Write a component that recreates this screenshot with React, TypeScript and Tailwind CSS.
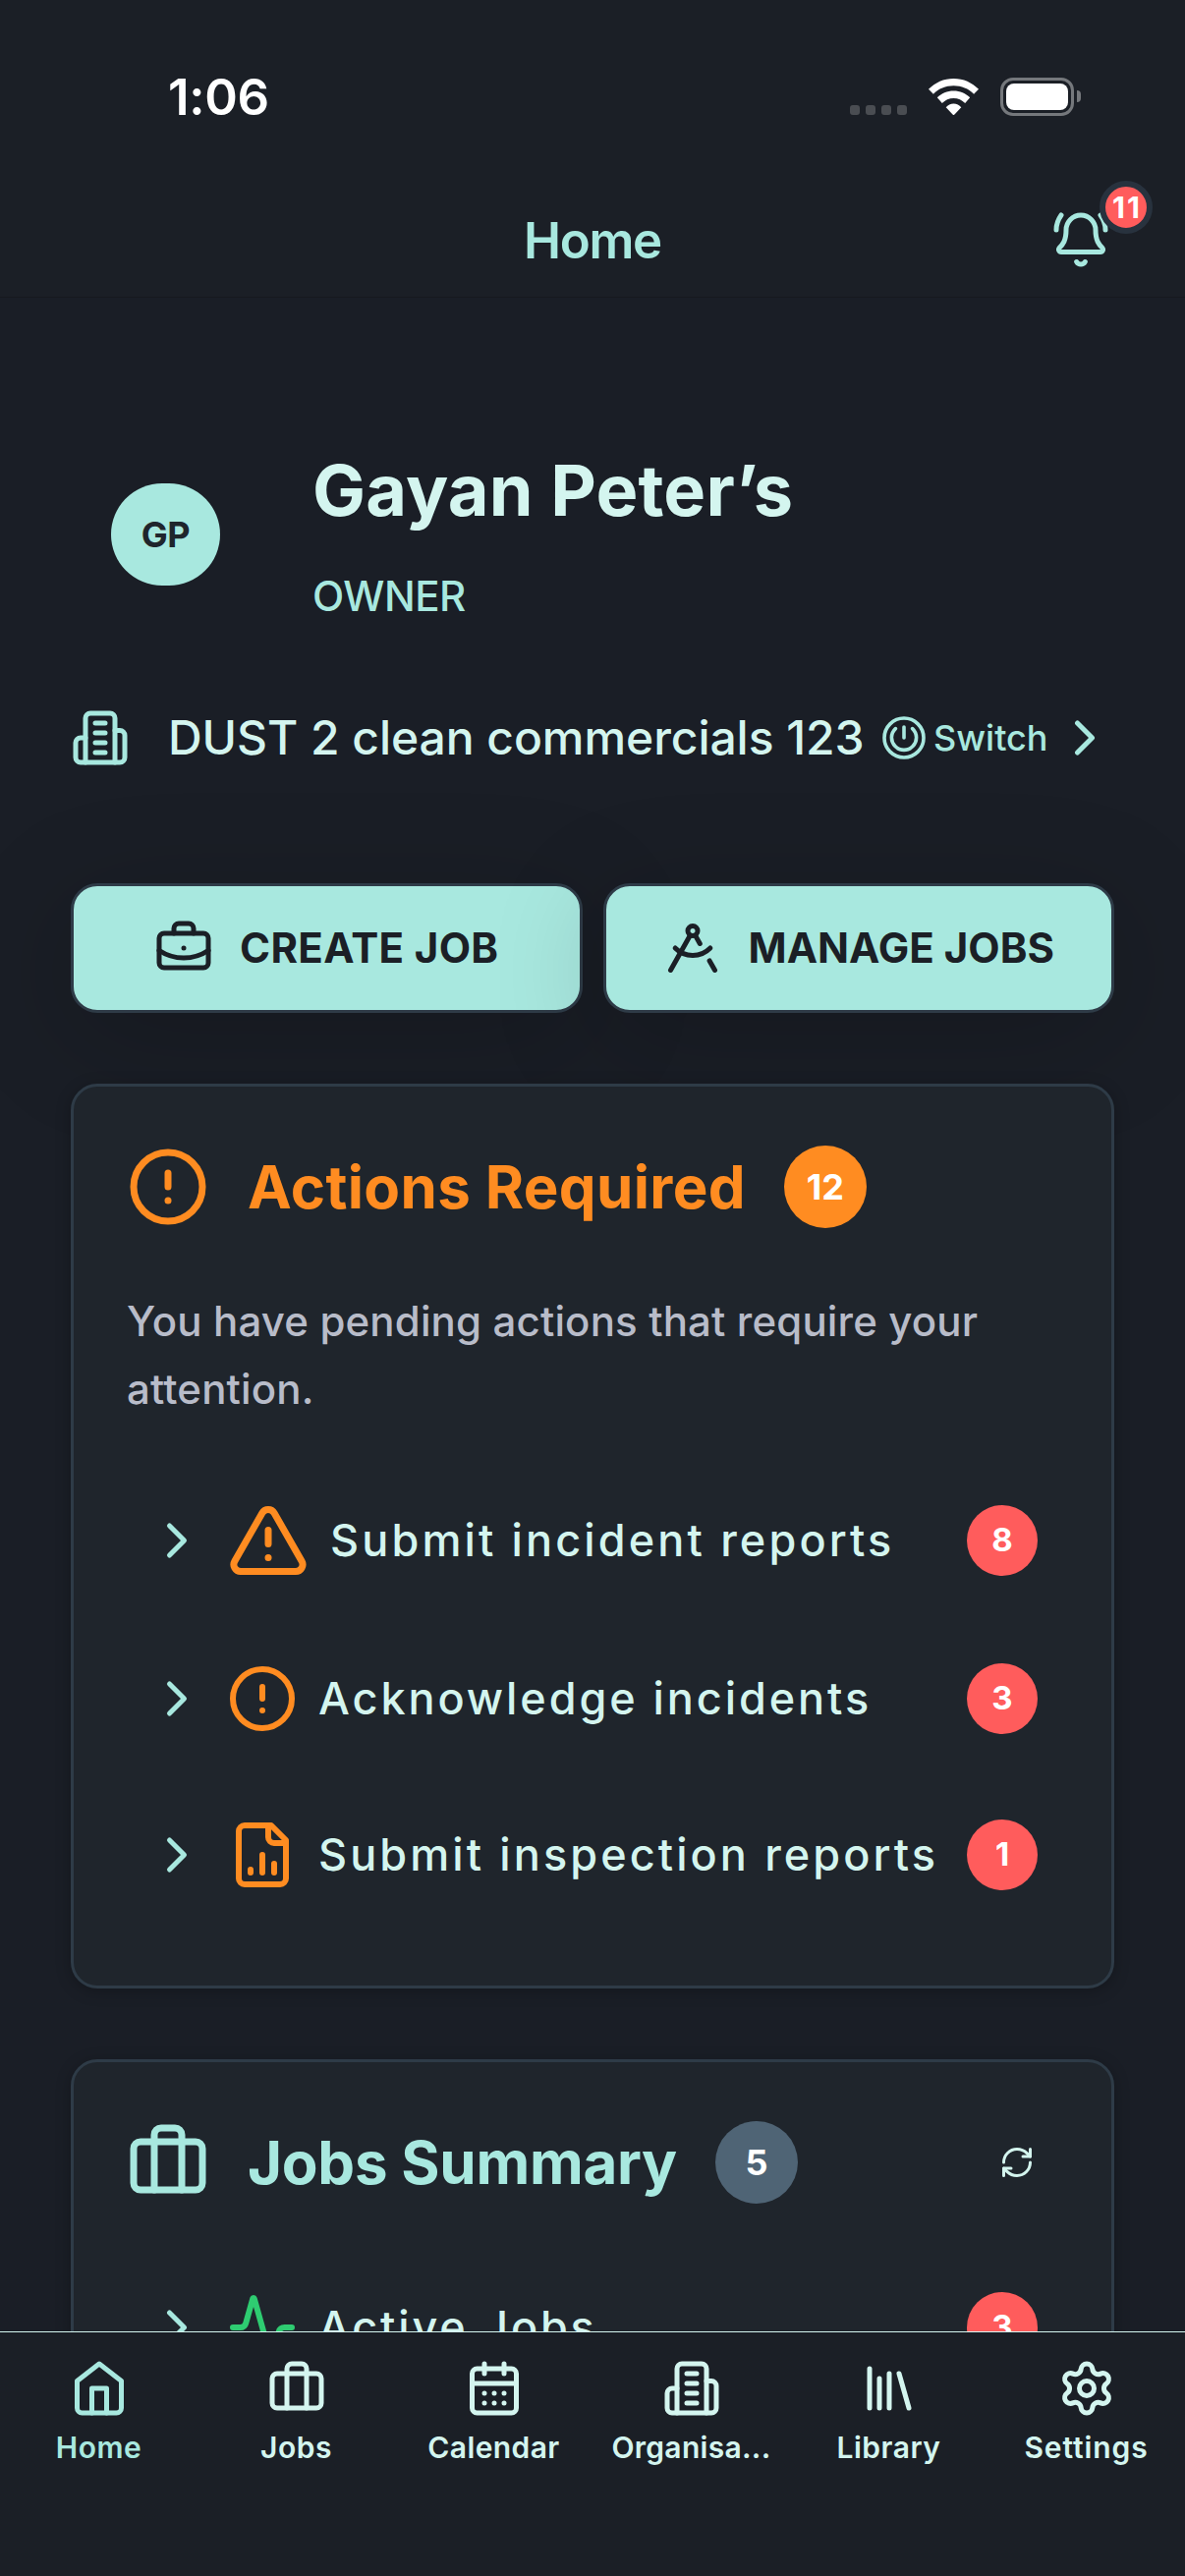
import type { ReactNode } from "react";

type IconProps = { className?: string; children: ReactNode };

function Icon({ className = "size-[60px]", children }: IconProps) {
  return (
    <svg
      viewBox="0 0 24 24"
      fill="none"
      stroke="currentColor"
      strokeWidth="2"
      strokeLinecap="round"
      strokeLinejoin="round"
      className={`shrink-0 ${className}`}
    >
      {children}
    </svg>
  );
}

type P = { className?: string };

const BellRing = (p: P) => (
  <Icon {...p}>
    <path d="M10.268 21a2 2 0 0 0 3.464 0" />
    <path d="M22 8c0-2.3-.8-4.3-2-6" />
    <path d="M3.262 15.326A1 1 0 0 0 4 17h16a1 1 0 0 0 .74-1.673C19.41 13.956 18 12.499 18 8A6 6 0 0 0 6 8c0 4.499-1.411 5.956-2.738 7.326" />
    <path d="M4 2C2.8 3.7 2 5.7 2 8" />
  </Icon>
);

const Building = (p: P) => (
  <Icon {...p}>
    <path d="M6 22V4a2 2 0 0 1 2-2h8a2 2 0 0 1 2 2v18Z" />
    <path d="M6 12H4a2 2 0 0 0-2 2v6a2 2 0 0 0 2 2h2" />
    <path d="M18 9h2a2 2 0 0 1 2 2v9a2 2 0 0 1-2 2h-2" />
    <path d="M10 6h4M10 10h4M10 14h4M10 18h4" />
  </Icon>
);

const CirclePower = (p: P) => (
  <Icon {...p}>
    <g strokeWidth="1.8">
      <path d="M12 6.500v5.500" />
      <path d="M7.700 7.300a6.300 6.300 0 1 0 8.600 0" />
    </g>
    <circle cx="12" cy="12" r="10" strokeWidth="1.8" />
  </Icon>
);

const ChevronRight = (p: P) => (
  <Icon {...p}>
    <path d="m9 18 6-6-6-6" />
  </Icon>
);

const BriefcaseBusiness = (p: P) => (
  <Icon {...p}>
    <path d="M12 12h.01" />
    <path d="M16 6V4a2 2 0 0 0-2-2h-4a2 2 0 0 0-2 2v2" />
    <path d="M22 13a18.15 18.15 0 0 1-20 0" />
    <rect width="20" height="14" x="2" y="6" rx="2" />
  </Icon>
);

const DraftingCompass = (p: P) => (
  <Icon {...p}>
    <path d="m12.99 6.74 1.93 3.44" />
    <path d="M19.136 12a10 10 0 0 1-14.271 0" />
    <path d="m21 21-2.16-3.84" />
    <path d="m3 21 8.02-14.26" />
    <circle cx="12" cy="5" r="2" />
  </Icon>
);

const CircleAlert = (p: P) => (
  <Icon {...p}>
    <circle cx="12" cy="12" r="10" />
    <path d="M12 8v4M12 16h.01" />
  </Icon>
);

const TriangleAlert = (p: P) => (
  <Icon {...p}>
    <path d="m21.73 18-8-14a2 2 0 0 0-3.48 0l-8 14A2 2 0 0 0 4 21h16a2 2 0 0 0 1.73-3" />
    <path d="M12 9v4M12 17h.01" />
  </Icon>
);

const FileChart = (p: P) => (
  <Icon {...p}>
    <path d="M15 2H6a2 2 0 0 0-2 2v16a2 2 0 0 0 2 2h12a2 2 0 0 0 2-2V7Z" />
    <path d="M14 2v4a2 2 0 0 0 2 2h4" />
    <path d="M8 18v-1M12 18v-6M16 18v-3" />
  </Icon>
);

const Briefcase = (p: P) => (
  <Icon {...p}>
    <path d="M16 20V4a2 2 0 0 0-2-2h-4a2 2 0 0 0-2 2v16" />
    <rect width="20" height="14" x="2" y="6" rx="2" />
  </Icon>
);

const Refresh = (p: P) => (
  <Icon {...p}>
    <path d="M3 12a9 9 0 0 1 9-9 9.75 9.75 0 0 1 6.74 2.74L21 8" />
    <path d="M21 3v5h-5" />
    <path d="M21 12a9 9 0 0 1-9 9 9.75 9.75 0 0 1-6.74-2.74L3 16" />
    <path d="M8 16H3v5" />
  </Icon>
);

const Activity = (p: P) => (
  <Icon {...p}>
    <path d="M22 12h-2.48a2 2 0 0 0-1.93 1.46l-2.35 8.36a.25.25 0 0 1-.48 0L9.24 2.18a.25.25 0 0 0-.48 0l-2.35 8.36A2 2 0 0 1 4.49 12H2" />
  </Icon>
);

const House = (p: P) => (
  <Icon {...p}>
    <path d="m3 9 9-7 9 7v11a2 2 0 0 1-2 2H5a2 2 0 0 1-2-2z" />
    <path d="M9 22V12h6v10" />
  </Icon>
);

const CalendarDays = (p: P) => (
  <Icon {...p}>
    <path d="M8 2v4M16 2v4" />
    <rect width="18" height="18" x="3" y="4" rx="2" />
    <path d="M3 10h18" />
    <path d="M8 14h.01M12 14h.01M16 14h.01M8 18h.01M12 18h.01M16 18h.01" />
  </Icon>
);

const Library = (p: P) => (
  <Icon {...p}>
    <path d="m16 6 4 14M12 6v14M8 8v12M4 4v16" />
  </Icon>
);

const Settings = (p: P) => (
  <Icon {...p}>
    <path d="M9.671 4.136a2.34 2.34 0 0 1 4.659 0 2.34 2.34 0 0 0 3.319 1.915 2.34 2.34 0 0 1 2.33 4.033 2.34 2.34 0 0 0 0 3.831 2.34 2.34 0 0 1-2.33 4.033 2.34 2.34 0 0 0-3.319 1.915 2.34 2.34 0 0 1-4.659 0 2.34 2.34 0 0 0-3.32-1.915 2.34 2.34 0 0 1-2.33-4.033 2.34 2.34 0 0 0 0-3.831A2.34 2.34 0 0 1 6.35 6.051a2.34 2.34 0 0 0 3.319-1.915" />
    <circle cx="12" cy="12" r="3" />
  </Icon>
);

function StatusBar() {
  return (
    <div className="flex h-[177px] items-center justify-between pt-[19px] pr-[106px] pl-[171px] text-white">
      <span className="text-[51px] leading-none font-semibold tracking-[-0.3px]">1:06</span>
      <div className="flex h-[39px] items-start">
        <div className="mt-7 flex gap-1.5">
          {[0, 1, 2, 3].map((i) => (
            <span key={i} className="size-2.5 rounded-[3px] bg-[#4a4d52]" />
          ))}
        </div>
        <svg viewBox="0 0 51 37" className="mt-px ml-[22px] h-[37px] w-[51px]" fill="currentColor">
          <path d="M0 10.8C6.800 4 15.500 0 25.500 0s18.700 4 25.500 10.800l-4.900 4.900C40.600 10.300 33.600 7.300 25.500 7.300S10.400 10.300 4.900 15.700z" />
          <path d="M8.800 19.300C13.200 15 19 12.500 25.500 12.500s12.300 2.500 16.700 6.800L37.200 25c-3.100-3.100-7.200-5-11.700-5s-8.600 1.900-11.700 5z" />
          <path d="M17.700 29.300c2-2.400 4.700-3.900 7.800-3.900s5.800 1.500 7.800 3.900L26.200 36.700q-.7.600-1.400 0z" />
        </svg>
        <div className="ml-[22px] flex items-center gap-[3px]">
          <div className="h-[39px] w-[75px] rounded-[13px] border-[3px] border-[#75787c] p-[3px]">
            <div className="h-full rounded-[8px] bg-white" />
          </div>
          <div className="h-3 w-1 rounded-r-full bg-[#75787c]" />
        </div>
      </div>
    </div>
  );
}

function Header() {
  return (
    <header className="border-b border-[#16191f] bg-[#1b1f26]">
      <StatusBar />
      <div className="grid h-[125px] grid-cols-3 items-center pt-[9px] pr-[76px] pl-[76px] text-[#a8e8df]">
        <h1 className="col-start-2 text-center text-[51px] leading-none font-semibold tracking-[-1.3px]">
          Home
        </h1>
        <div className="relative justify-self-end">
          <BellRing />
          <span className="absolute -top-[30px] left-[49px] flex size-[54px] items-center justify-center rounded-full border-[6px] border-[#28323e] bg-[#ff5c5c] pl-0.5 text-[30px] leading-none font-bold tracking-[2px] text-white">
            11
          </span>
        </div>
      </div>
    </header>
  );
}

function Profile() {
  return (
    <section className="ml-[41px] flex items-center gap-[94px]">
      <div className="flex h-[104px] w-[111px] items-center justify-center rounded-[52px] bg-[#a8e8df] text-[36px] font-bold tracking-[-0.5px] text-[#1f252c]">
        GP
      </div>
      <div className="flex flex-col gap-[39px]">
        <h2 className="text-[72px] leading-[86px] font-bold tracking-[0.2px] text-[#d4f5ef]">
          Gayan Peter’s
        </h2>
        <p className="text-[42px] leading-[51px] font-medium tracking-[-0.5px] text-[#a8e8df]">
          OWNER
        </p>
      </div>
    </section>
  );
}

function OrganisationRow() {
  return (
    <section className="mt-[89px] flex h-[60px] items-center text-[#a8e8df]">
      <Building />
      <span className="ml-[39px] text-[48px] leading-none font-medium tracking-[-0.06px] whitespace-nowrap text-[#d4f5ef]">
        DUST 2 clean commercials 123
      </span>
      <div className="ml-auto flex items-center">
        <CirclePower className="size-12" />
        <span className="ml-1.5 w-[124px] text-[36px] leading-none font-medium">Switch</span>
        <ChevronRight />
      </div>
    </section>
  );
}

function ActionButton({
  icon,
  label,
  className,
}: {
  icon: ReactNode;
  label: string;
  className: string;
}) {
  return (
    <button
      className={`flex items-center justify-center gap-[27px] rounded-[27px] border-[3px] border-[#2e3b47] bg-[#a8e8df] text-[42px] leading-none font-bold whitespace-nowrap text-[#1b1f26] shadow-[0_24px_120px_rgba(0,0,0,0.2)] ${className}`}
    >
      {icon}
      {label}
    </button>
  );
}

function CountBadge({ count, className }: { count: number; className: string }) {
  return (
    <span
      className={`flex shrink-0 items-center justify-center rounded-full leading-none font-bold text-white ${className}`}
    >
      {count}
    </span>
  );
}

function Row({
  icon,
  label,
  count,
  className = "h-[159px] tracking-[3.1px]",
}: {
  icon: ReactNode;
  label: string;
  count: number;
  className?: string;
}) {
  return (
    <li className={`flex items-center gap-[21px] px-[21px] ${className}`}>
      <ChevronRight className="size-[60px] text-[#a8e8df]" />
      {icon}
      <span className="text-[45px] leading-none font-medium whitespace-nowrap text-[#d4f5ef]">
        {label}
      </span>
      <CountBadge
        count={count}
        className="ml-auto size-[72px] bg-[#ff5c5c] text-[33px] tracking-normal"
      />
    </li>
  );
}

const cardClass =
  "mt-[72px] shrink-0 rounded-[27px] border-[3px] border-[#2e3b47] bg-[#1f252c] px-[54px] pt-[60px] shadow-[0_3px_15px_rgba(0,0,0,0.25)]";

const tabs = [
  { label: "Home", icon: House, active: true, tracking: "tracking-[0.5px]" },
  { label: "Jobs", icon: Briefcase, tracking: "tracking-[0.5px]" },
  { label: "Calendar", icon: CalendarDays, tracking: "tracking-[0.4px]" },
  { label: "Organisa...", icon: Building, tracking: "tracking-[0.3px]" },
  { label: "Library", icon: Library, tracking: "tracking-[0.5px]" },
  { label: "Settings", icon: Settings, tracking: "tracking-[0.9px]" },
];

export default function App() {
  return (
    <div className="flex h-[2622px] w-[1206px] flex-col overflow-hidden bg-[#1a1e26] font-['Inter',sans-serif]">
      <Header />
      <main className="flex min-h-0 flex-1 flex-col overflow-hidden px-[72px] pt-[153px]">
        <Profile />
        <OrganisationRow />
        <section className="mt-[118px] grid h-[132px] shrink-0 grid-cols-2 gap-[21px]">
          <ActionButton
            icon={<BriefcaseBusiness />}
            label="CREATE JOB"
            className="tracking-[0.35px]"
          />
          <ActionButton
            icon={<DraftingCompass />}
            label="MANAGE JOBS"
            className="tracking-[0.02px]"
          />
        </section>

        <section className={`h-[921px] ${cardClass}`}>
          <div className="flex h-[84px] items-center gap-[39px] text-[#ff8c21]">
            <CircleAlert className="size-[84px]" />
            <h3 className="text-[60px] leading-none font-bold tracking-[0.35px]">Actions Required</h3>
            <CountBadge count={12} className="size-[84px] bg-[#ff8c21] text-[36px]" />
          </div>
          <p className="mt-[60px] text-[42px] leading-[69px] font-medium tracking-[0.15px] text-[#b8bcc9]">
            You have pending actions that require your attention.
          </p>
          <ul className="mt-[38px]">
            <Row
              icon={<TriangleAlert className="size-[84px] text-[#ff8c21]" />}
              label="Submit incident reports"
              count={8}
              className="h-[163px] tracking-[3.14px]"
            />
            <Row
              icon={<CircleAlert className="size-[72px] text-[#ff8c21]" />}
              label="Acknowledge incidents"
              count={3}
              className="h-[159px] tracking-[2.93px]"
            />
            <Row
              icon={<FileChart className="size-[72px] text-[#ff8c21]" />}
              label="Submit inspection reports"
              count={1}
            />
          </ul>
        </section>

        <section className={`h-[600px] ${cardClass}`}>
          <div className="flex h-[84px] items-center gap-[39px] text-[#a8e8df]">
            <Briefcase className="size-[84px]" />
            <h3 className="text-[60px] leading-none font-bold tracking-[-0.25px]">Jobs Summary</h3>
            <CountBadge count={5} className="size-[84px] bg-[#4f6475] text-[36px]" />
            <Refresh className="mr-6 ml-auto size-9 text-[#d4f5ef]" />
          </div>
          <ul className="mt-[46px]">
            <Row
              icon={<Activity className="size-[72px] text-[#2ecc71]" />}
              label="Active Jobs"
              count={3}
              className="h-[159px] tracking-[2.8px]"
            />
          </ul>
        </section>
      </main>

      <nav className="relative grid h-[249px] shrink-0 grid-cols-6 border-t border-[#d4f5ef] bg-[#1b1f26] pt-[27px] text-[#d4f5ef]">
        {tabs.map(({ label, icon: TabIcon, active, tracking }) => (
          <a
            key={label}
            className={`flex flex-col items-center gap-3 ${active ? "text-[#a8e8df]" : ""}`}
          >
            <TabIcon />
            <span className={`text-[30px] leading-9 font-semibold ${tracking}`}>{label}</span>
          </a>
        ))}
      </nav>
    </div>
  );
}
